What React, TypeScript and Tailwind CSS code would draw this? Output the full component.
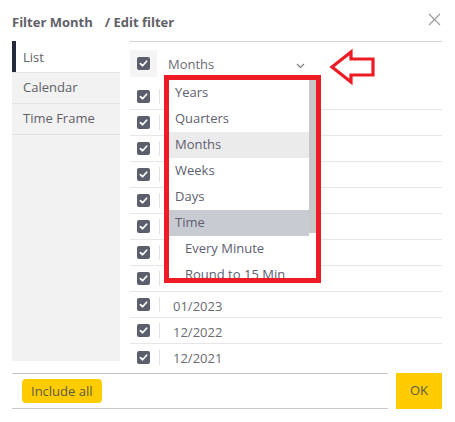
import React from "react";

const font = { fontFamily: '"Open Sans", "Noto Sans", sans-serif' };

function Check() {
  return (
    <span className="flex h-[13px] w-[13px] items-center justify-center rounded-[2px] bg-[#5b5f6c]">
      <svg width="9" height="9" viewBox="0 0 10 10" fill="none">
        <path d="M1.5 5.2 L4 7.5 L8.5 2.5" stroke="#fff" strokeWidth="1.9" strokeLinecap="round" strokeLinejoin="round" />
      </svg>
    </span>
  );
}

const rows = ["", "", "", "", "", "", "", "", "01/2023", "12/2022", "12/2021"];

const options = [
  { label: "Years" },
  { label: "Quarters" },
  { label: "Months", bg: "bg-[#ebebeb]" },
  { label: "Weeks" },
  { label: "Days" },
  { label: "Time", bg: "bg-[#c9cbd3]" },
  { label: "Every Minute", indent: true },
  { label: "Round to 15 Min", indent: true },
];

export default function App() {
  return (
    <div className="relative h-[422px] w-[455px] overflow-hidden bg-white text-[13px]" style={font}>
      {/* header */}
      <div className="flex h-[41px] items-center justify-between pl-[12px] pr-[14px]">
        <div className="pt-[5px] font-bold text-[#5f6168]">
          Filter Month<span className="ml-[12px]">/ Edit filter</span>
        </div>
        <svg width="13" height="13" viewBox="0 0 13 13" className="mb-[2px]">
          <path d="M1 1 L12 12 M12 1 L1 12" stroke="#9a9a9a" strokeWidth="1.1" />
        </svg>
      </div>

      {/* body */}
      <div className="flex h-[332px] pl-[12px] pr-[13px]">
        <div className="flex h-[320px] w-[108px] flex-col bg-[#f2f2f2] text-[#5f6168]">
          <div className="flex h-[31px] items-center border-l-[4px] border-[#262b3b] bg-white pl-[7px] pt-[2px]">List</div>
          <div className="flex h-[31px] items-center border-t border-[#e2e2e2] pl-[11px]">Calendar</div>
          <div className="flex h-[31px] items-center border-t border-[#e2e2e2] pl-[11px]">Time Frame</div>
          <div className="border-t border-[#e2e2e2]" />
        </div>

        <div className="relative ml-[10px] flex-1 border-t border-[#d3d3d3]">
          <div className="mt-[8px] flex h-[27px] items-center">
            <div className="flex h-[27px] w-[27px] items-center justify-center bg-[#f5f5f5]">
              <Check />
            </div>
            <div className="ml-[11px] flex w-[142px] items-center justify-between pt-[3px] text-[#6a6c73]">
              <span>Months</span>
              <svg width="9" height="6" viewBox="0 0 9 6" className="mr-[5px] mt-[2px]">
                <path d="M1 1 L4.5 4.5 L8 1" stroke="#7a7a7a" strokeWidth="1.1" fill="none" />
              </svg>
            </div>
          </div>

          <div className="mt-[7px]">
            {rows.map((r, i) => (
              <div key={i} className={`flex h-[26px] items-center ${i < rows.length - 1 ? "border-b border-[#e6e6e6]" : ""}`}>
                <div className="pl-[7px]">
                  <Check />
                </div>
                <div className="ml-[9px] h-[15px] w-px bg-[#e2e2e2]" />
                <span className="ml-[13px] pt-[4px] text-[#6a6c73]">{r}</span>
              </div>
            ))}
          </div>

          {/* dropdown */}
          <div className="absolute left-[34px] top-[33px] h-[208px] w-[157px] overflow-hidden border-[5px] border-[#ed1c24] bg-white">
            <div className="flex h-full">
              <div className="flex-1">
                {options.map((o) => (
                  <div
                    key={o.label}
                    className={`flex h-[26px] items-center text-[#5e6070] ${o.bg ?? ""} ${o.indent ? "pl-[16px]" : "pl-[6px]"}`}
                  >
                    {o.label}
                  </div>
                ))}
              </div>
              <div className="w-[7px]">
                <div className="h-[153px] bg-[#c8c8c8]" />
              </div>
            </div>
          </div>
        </div>
      </div>

      {/* red arrow */}
      <svg className="absolute left-[329px] top-[49px]" width="48" height="36" viewBox="0 0 48 36">
        <path
          d="M3 18 L22 3 L22 10 L44 10 L44 26 L22 26 L22 33 Z"
          fill="none"
          stroke="#ed1c24"
          strokeWidth="3.2"
          strokeLinejoin="miter"
        />
      </svg>

      {/* footer */}
      <div className="flex h-[36px] pl-[12px] pr-[13px]">
        <div className="flex flex-1 items-center border-y border-[#c8c8c8] pl-[10px]">
          <button className="h-[24px] rounded-[4px] bg-[#ffcc00] px-[9px] pt-[1px] text-[#5a5a4a]">Include all</button>
        </div>
        <button className="ml-[8px] w-[46px] bg-[#ffcc00] text-[#5a5a4a]">OK</button>
      </div>
    </div>
  );
}
